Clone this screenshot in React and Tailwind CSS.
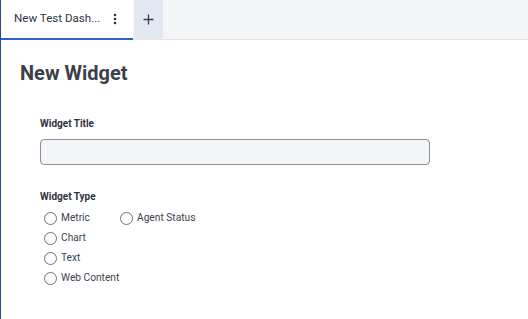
export default function App() {
  const font = { fontFamily: "Roboto, 'Noto Sans', sans-serif" };
  const Radio = ({ label }) => (
    <label className="flex items-center gap-[4px] h-[20px] whitespace-nowrap">
      <span className="w-[13px] h-[13px] rounded-full border-[1.5px] border-[#6b7079] bg-white shrink-0" />
      <span className="text-[10.2px] text-[#3d4250]">{label}</span>
    </label>
  );
  return (
    <div className="w-[528px] h-[319px] bg-white border-l border-[#2b4a8a] flex flex-col overflow-hidden" style={font}>
      <div className="h-[40px] bg-[#f4f5f7] border-b border-[#e1e4ea] flex items-stretch shrink-0">
        <div className="w-[132px] bg-white border-b-2 border-[#2d62c9] flex items-center pl-[13px] pr-[8px] -mb-px">
          <span className="text-[11.6px] text-[#2f3340] flex-1 whitespace-nowrap">New Test Dash...</span>
          <svg width="4" height="12" viewBox="0 0 4 12" className="mr-[8px]">
            <circle cx="2" cy="2" r="1.3" fill="#2f3340" />
            <circle cx="2" cy="6" r="1.3" fill="#2f3340" />
            <circle cx="2" cy="10" r="1.3" fill="#2f3340" />
          </svg>
        </div>
        <div className="w-[29px] ml-[1px] bg-[#e3e7ef] rounded-b-[4px] flex items-center justify-center">
          <svg width="11" height="11" viewBox="0 0 11 11">
            <path d="M5.5 0.5v10M0.5 5.5h10" stroke="#3a3f4b" strokeWidth="1.3" />
          </svg>
        </div>
      </div>
      <div className="pl-[19px] pt-[19px]">
        <h1 className="text-[20px] font-bold text-[#3b3f4a] leading-[28px]">New Widget</h1>
        <div className="pl-[20px] pt-[30px]">
          <div className="text-[10px] font-bold text-[#2f3340] leading-[14px]">Widget Title</div>
          <div className="mt-[8px] w-[390px] h-[26px] rounded-[4px] border border-[#8c909a] bg-[#f4f5f8]" />
          <div className="mt-[25px] text-[10px] font-bold text-[#2f3340] leading-[14px]">Widget Type</div>
          <div className="mt-[4px] pl-[4px] flex">
            <div className="flex flex-col w-[76px]">
              <Radio label="Metric" />
              <Radio label="Chart" />
              <Radio label="Text" />
              <Radio label="Web Content" />
            </div>
            <div className="flex flex-col">
              <Radio label="Agent Status" />
            </div>
          </div>
        </div>
      </div>
    </div>
  );
}
